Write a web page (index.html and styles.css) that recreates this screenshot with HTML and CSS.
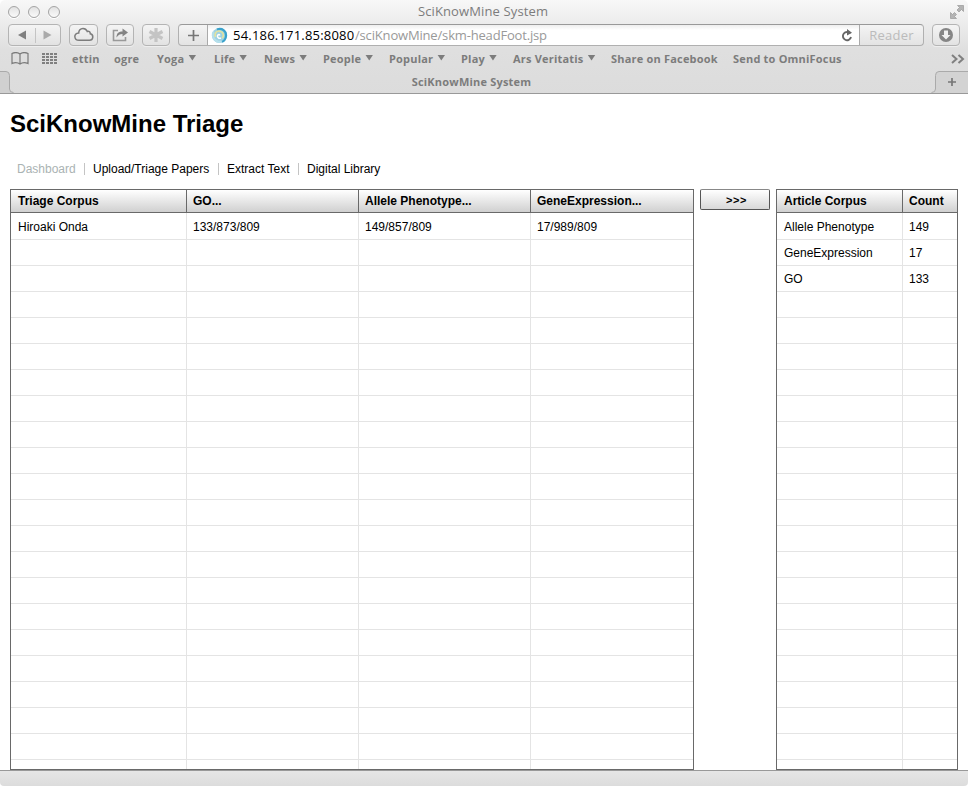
FILE: index.html
```html
<!DOCTYPE html>
<html lang="en">
<head>
<meta charset="utf-8">
<title>SciKnowMine System</title>
<link rel="stylesheet" href="styles.css">
</head>
<body>
<header class="chrome">
  <div class="titlebar">
    <div class="lights"><i></i><i></i><i></i></div>
    <span class="window-title">SciKnowMine System</span>
    <svg class="fullscreen" width="16" height="16" viewBox="0 0 16 16" fill="#b4b4b4" stroke="#999" stroke-width=".7"><path d="M8.500 1.500h6v6l-2-2-2.500 2.500-2-2 2.500-2.500z"/><path d="M1.500 8.500v6h6l-2-2 2-2-2-2-2 2z"/></svg>
  </div>
  <div class="toolbar">
    <div class="btn nav">
      <svg width="52" height="20" viewBox="0 0 52 20"><path d="M17 5.500v9L9 10z" fill="#7f7f7f"/><path d="M26.500 3v15" stroke="#c4c4c4"/><path d="M34.500 5.500v9l8-4.500z" fill="#aaa"/></svg>
    </div>
    <div class="btn cloud"><svg width="22" height="16" viewBox="0 0 22 16" fill="none" stroke="#7c7c7c" stroke-width="1.500"><path d="M6 13.300h10.500a3.300 3.300 0 0 0 .8-6.500C17.300 4.800 15.800 4 14.300 4.500 13.200 2 11.700 1.500 10 1.500 7.400 1.500 5.700 3.500 5.700 6 0 6.200 1 13.300 6 13.300z"/></svg></div>
    <div class="btn share"><svg width="18" height="16" viewBox="0 0 18 16"><path d="M7 3.500H2.500v10h12V10" fill="none" stroke="#999" stroke-width="1.600"/><path d="M5.500 10.500C5.500 6 8 4.500 11.500 4.500V1.500L17 5.500l-5.500 4v-2.500C9 7 7 8 5.500 10.500z" fill="#838383"/></svg></div>
    <div class="btn burst"><svg width="16" height="16" viewBox="0 0 16 16" stroke="#c4c4c4" stroke-width="3.200"><path d="M8 1v14M1.500 4.500l13 7M14.500 4.500l-13 7"/></svg></div>
    <div class="address">
      <div class="add"><svg width="11" height="11" viewBox="0 0 11 11" stroke="#777" stroke-width="1.700"><path d="M5.500 0v11M0 5.500h11"/></svg></div>
      <div class="field">
        <svg class="favicon" width="17" height="17" viewBox="0 0 17 17" fill="none"><circle cx="8.500" cy="8.500" r="7.600" fill="#9ed2e3"/><path d="M2.500 5a7 7 0 0 0 3 9c2.500 1.500 6 1 8-1" stroke="#b5dfeb" stroke-width="2.400"/><path d="M6 2.500c5-2 9.500 1.500 9 6.500-.3 3-2 5-4 5.800" stroke="#3aa2cb" stroke-width="2.200"/><path d="M4.500 10C3 6 6 3.500 9 4.200c3.500.8 4.500 4.800 2 7" stroke="#e3e3a0" stroke-width="1.600"/><path d="M8.500 8.500c.6-1.500-1.500-1.500-2 .2-.4 2 1.500 3.300 3.500 2.300" stroke="#fff" stroke-width="1.500"/></svg>
        <span class="host">54.186.171.85:8080</span><span class="path">/sciKnowMine/skm-headFoot.jsp</span>
        <svg class="reload" width="12" height="13" viewBox="0 0 12 13"><path d="M9.200 4.500A4.100 4.100 0 1 0 10 8" fill="none" stroke="#666" stroke-width="1.900"/><path d="M6 0l5 3.700-5 2.800z" fill="#666"/></svg>
      </div>
      <div class="reader"><span>Reader</span></div>
    </div>
    <div class="btn download"><svg width="16" height="16" viewBox="0 0 16 16"><circle cx="8" cy="8" r="7" fill="#858585"/><path d="M6 3.500h4V8h2.500L8 12.500 3.500 8H6z" fill="#f0f0f0"/></svg></div>
  </div>
  <nav class="bookmarks">
    <svg class="book" width="18" height="13" viewBox="0 0 18 13" fill="none" stroke="#7a7a7a" stroke-width="1.200"><path d="M9 2C7 .5 3.500.3 1 1.500v10C3.500 10.300 7 10.500 9 12c2-1.500 5.500-1.700 8-.5v-10C14.500.3 11 .5 9 2zM9 2v10"/></svg>
    <svg class="grid-icon" width="15" height="11" viewBox="0 0 15 11" stroke="#808080" stroke-width="2" stroke-dasharray="3 1"><path d="M0 1h15M0 4h15M0 7h15M0 10h15"/></svg>
    <span class="bm w42">ettin</span>
    <span class="bm w43">ogre</span>
    <span class="bm w57 menu">Yoga</span>
    <span class="bm w50 menu">Life</span>
    <span class="bm w59 menu">News</span>
    <span class="bm w66 menu">People</span>
    <span class="bm w72 menu">Popular</span>
    <span class="bm w52 menu">Play</span>
    <span class="bm w98 menu">Ars Veritatis</span>
    <span class="bm w122">Share on Facebook</span>
    <span class="bm">Send to OmniFocus</span>
    <svg class="more" width="14" height="10" viewBox="0 0 14 10" fill="none" stroke="#808080" stroke-width="2"><path d="M1 1l4.500 4L1 9M7.500 1L12 5 7.500 9"/></svg>
  </nav>
  <div class="tabs">
    <svg class="tab-edge" width="15" height="22" viewBox="0 0 15 22"><path d="M0 .5h6q3.500 0 3.500 4V18q0 4 4 4H0z" fill="#d0d0d0"/><path d="M0 .5h6q3.500 0 3.500 4V18q0 3.500 4 3.500" fill="none" stroke="#aaa"/></svg>
    <div class="tab"><span>SciKnowMine System</span></div>
    <svg class="tab-new" width="38" height="22" viewBox="0 0 38 22"><path d="M38 .5H9Q5.500.5 5.500 4.500V18q0 4-4 4H38z" fill="#d3d3d3"/><path d="M38 .5H9Q5.500.5 5.500 4.500V18q0 3.500-4 3.500" fill="none" stroke="#aaa"/><path d="M22 7v8M18 11h8" stroke="#777" stroke-width="1.700"/></svg>
  </div>
</header>
<main class="page">
  <h1><span>SciKnowMine Triage</span></h1>
  <nav class="links">
    <a class="current">Dashboard</a><a class="upload">Upload/Triage Papers</a><a class="extract">Extract Text</a><a>Digital Library</a>
  </nav>
  <div class="panels">
    <section class="grid triage">
      <div class="row head"><b>Triage Corpus</b><b>GO...</b><b>Allele Phenotype...</b><b>GeneExpression...</b></div>
      <div class="rows">
        <div class="col"><span>Hiroaki Onda</span></div>
        <div class="col"><span>133/873/809</span></div>
        <div class="col"><span>149/857/809</span></div>
        <div class="col"><span>17/989/809</span></div>
      </div>
    </section>
    <button class="move">&gt;&gt;&gt;</button>
    <section class="grid article">
      <div class="row head"><b>Article Corpus</b><b>Count</b></div>
      <div class="rows">
        <div class="col"><span>Allele Phenotype</span><span>GeneExpression</span><span>GO</span></div>
        <div class="col"><span>149</span><span>17</span><span>133</span></div>
      </div>
    </section>
  </div>
</main>
<footer class="statusbar"></footer>
</body>
</html>
```
FILE: styles.css
```css
* { box-sizing: border-box; }
html { background: #fff; }
body { margin: 0; width: 968px; height: 786px; overflow: hidden; display: flex; flex-direction: column; background: #fff; font: 12px/16px "Liberation Sans", sans-serif; color: #000; }
svg { display: block; flex: none; }

.chrome { height: 94px; flex: none; background: linear-gradient(#f8f8f8 0, #ececec 24px, #dfdfdf 50px, #dcdcdc 94px); border-radius: 5px 5px 0 0; font-family: "Open Sans", sans-serif; color: #7c7c7c; }
.titlebar { height: 24px; display: grid; grid-template-columns: 60px 1fr 60px; align-items: center; }
.lights { display: flex; gap: 8px; padding-left: 8px; }
.lights i { width: 12px; height: 12px; border: 1px solid #a4a4a4; border-radius: 50%; background: linear-gradient(#e2e2e2, #fafafa); box-shadow: 0 1px 0 #fff; }
.window-title { padding: 0 2px 2px 0; text-align: center; font-size: 13px; letter-spacing: .13px; }
.fullscreen { justify-self: end; margin-right: 3px; }

.toolbar { height: 22px; display: flex; padding-left: 8px; }
.btn { height: 22px; border: 1px solid #b4b4b4; border-radius: 4px; background: linear-gradient(#f4f4f4, #e2e2e2); display: flex; align-items: center; justify-content: center; box-shadow: 0 1px 0 #eee; flex: none; }
.nav { width: 53px; margin-right: 8px; }
.cloud { width: 29px; margin-right: 8px; }
.share { width: 28px; margin-right: 8px; }
.burst { width: 28px; margin-right: 8px; }
.download { width: 28px; margin-left: 8px; }
.address { width: 746px; height: 22px; display: flex; border: 1px solid #b0b0b0; border-top-color: #999; border-radius: 4px; background: linear-gradient(#f4f4f4, #e3e3e3); }
.add { width: 28px; display: flex; align-items: center; justify-content: center; }
.field { width: 653px; display: flex; align-items: center; padding: 0 6px 0 3px; border: solid #aaa; border-width: 0 1px; background: linear-gradient(#eee, #fff 5px); font-size: 13px; line-height: 20px; white-space: nowrap; }
.favicon { margin-right: 5px; }
.host { color: #000; width: 122px; letter-spacing: .2px; }
.path { color: #999; letter-spacing: -.17px; }
.reload { margin-left: auto; }
.reader { flex: 1; text-align: center; color: #bbb; font-size: 13px; line-height: 20px; letter-spacing: .2px; }

.bookmarks { height: 25px; display: flex; align-items: center; padding-left: 11px; font-size: 11px; font-weight: 700; letter-spacing: .2px; white-space: nowrap; }
.book { margin-right: 13px; }
.grid-icon { margin-right: 15px; }
.bm { flex: none; }
.w42 { width: 42px; } .w43 { width: 43px; } .w57 { width: 57px; }
.w50 { width: 50px; } .w59 { width: 59px; } .w66 { width: 66px; }
.w72 { width: 72px; } .w52 { width: 52px; } .w98 { width: 98px; } .w122 { width: 122px; }
.menu::after { content: ""; display: inline-block; width: 8px; height: 6px; margin-left: 4px; background: #7c7c7c; clip-path: polygon(0 0, 100% 0, 50% 100%); vertical-align: 2px; }
.more { margin-left: auto; margin-right: 3px; }

.tabs { height: 23px; display: flex; border-bottom: 1px solid #999; }
.tab { flex: 1; padding-right: 2px; text-align: center; font-size: 11px; line-height: 22px; font-weight: 700; letter-spacing: .2px; }

.page { height: 676px; padding: 0 10px; flex: none; }
h1 { margin: 0; padding-top: 15px; height: 67px; font-size: 24px; line-height: 29px; }
.links { height: 28px; padding-left: 7px; display: flex; align-items: flex-start; }
.links a { line-height: 16px; white-space: nowrap; }
.links a + a { background: linear-gradient(#c4c4c4, #c4c4c4) 0 2px / 1px 12px no-repeat; padding-left: 9px; }
.links .current { color: #aab3b3; width: 67px; }
.links .upload { width: 134px; }
.links .extract { width: 80px; }

.panels { display: flex; align-items: flex-start; height: 581px; }
.grid { height: 581px; border: 1px solid #696969; display: flex; flex-direction: column; }
.triage { width: 684px; }
.article { width: 182px; }
.row, .rows { display: grid; }
.triage .row, .triage .rows { grid-template-columns: 176px 172px 172px 162px; }
.article .row, .article .rows { grid-template-columns: 126px 54px; }
.head { height: 23px; background: linear-gradient(#fff, #d0d0d0); border-bottom: 1px solid #696969; line-height: 22px; }
.head b { border-right: 1px solid #696969; padding-left: 7px; }
.head b:not(:first-child), .col:not(:first-child) span { padding-left: 6px; }
.head b:last-child { border-right: 0; }
/* one horizontal rule every 26px, down to the bottom of the list */
.rows { flex: 1; background: linear-gradient(#fff 25px, #e4e4e4 25px) 0 1px / 100% 26px; box-shadow: inset 0 1px #fff; }
.col { border-right: 1px solid #e4e4e4; }
.col:last-child { border-right: 0; }
.col span { display: block; height: 26px; line-height: 28px; padding-left: 7px; }
.move { width: 70px; height: 21px; margin: 0 6px; padding: 0 0 0 3px; border: 1px solid #555; border-top-color: #888; border-radius: 2px; background: linear-gradient(#fff, #d8d8d8); font: bold 11px/18px "Liberation Sans", sans-serif; letter-spacing: .5px; color: #000; }

.statusbar { height: 16px; border-top: 1px solid #999; background: linear-gradient(#e6e6e6, #dcdcdc); border-radius: 0 0 4px 4px; }
```
